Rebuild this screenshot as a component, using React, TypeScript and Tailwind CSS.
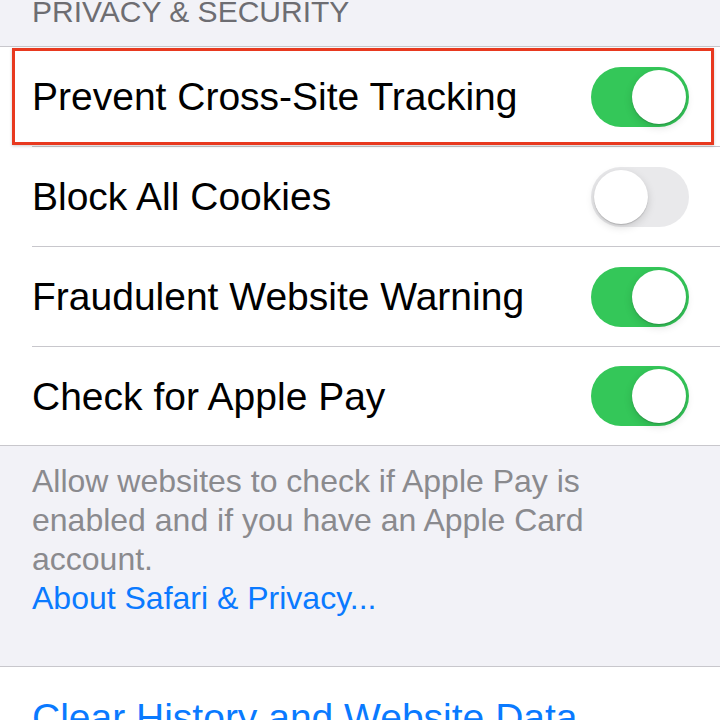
import React from 'react';

const FONT = { fontFamily: '"Liberation Sans", Arial, sans-serif' };

function Toggle({ on }: { on: boolean }) {
  return (
    <div
      className={
        'relative h-[60px] w-[98px] shrink-0 rounded-full ' +
        (on ? 'bg-[#34c759]' : 'bg-[#e9e9eb]')
      }
    >
      <div
        className={
          'absolute top-[3px] h-[54px] w-[54px] rounded-full bg-white shadow-[0_3px_8px_rgba(0,0,0,0.15),0_1px_1px_rgba(0,0,0,0.16)] ' +
          (on ? 'right-[3px]' : 'left-[3px]')
        }
      />
    </div>
  );
}

function Row({ label, on, last }: { label: string; on: boolean; last?: boolean }) {
  return (
    <div className="pl-[32px]">
      <div
        className={
          'flex items-center justify-between pr-[31px] ' +
          (last ? 'h-[98px]' : 'h-[100px] border-b border-[#c8c7cc]')
        }
      >
        <span className="text-[39px] leading-none text-black">{label}</span>
        <Toggle on={on} />
      </div>
    </div>
  );
}

export default function App() {
  return (
    <div className="h-[720px] w-[720px] overflow-hidden bg-[#f2f2f7]" style={FONT}>
      <div className="flex h-[47px] items-start border-b border-[#c8c7cc] pl-[32px]">
        <div className="-mt-[3px] text-[30px] leading-[30px] text-[#6d6d72]">PRIVACY &amp; SECURITY</div>
      </div>

      <div className="relative border-b border-[#c8c7cc] bg-white">
        <Row label="Prevent Cross-Site Tracking" on />
        <Row label="Block All Cookies" on={false} />
        <Row label="Fraudulent Website Warning" on />
        <Row label="Check for Apple Pay" on last />
        {/* highlight annotation */}
        <div className="pointer-events-none absolute left-[12px] top-[1px] h-[97px] w-[702px] border-[3px] border-[#e8391f] shadow-[0_1px_3px_rgba(0,0,0,0.2)]" />
      </div>

      <div className="h-[221px] border-b border-[#c8c7cc] px-[32px] pt-[16px] text-[32px] leading-[39px]">
        <p className="text-[#8a8a8e]">
          Allow websites to check if Apple Pay is enabled and if you have an Apple Card account.
        </p>
        <p className="text-[#0a7aff]">About Safari &amp; Privacy...</p>
      </div>

      <div className="flex h-[100px] items-center bg-white pl-[32px]">
        <span className="text-[39px] leading-none text-[#0a7aff]">Clear History and Website Data</span>
      </div>
    </div>
  );
}
